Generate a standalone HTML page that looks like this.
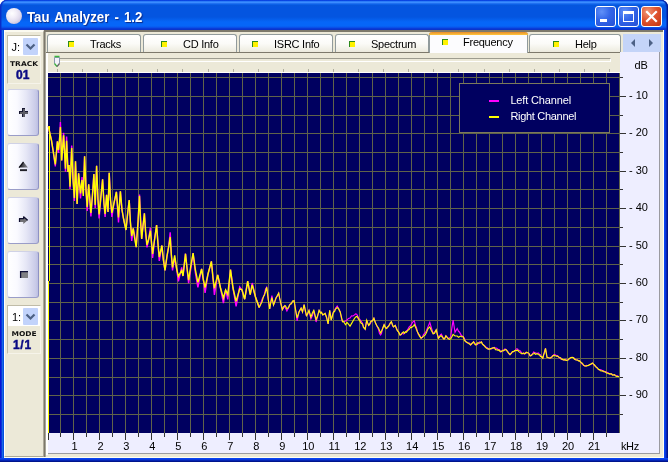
<!DOCTYPE html>
<html><head><meta charset="utf-8"><title>Tau Analyzer - 1.2</title>
<style>
*{box-sizing:border-box;margin:0;padding:0}
html,body{width:668px;height:462px;overflow:hidden;background:#fff}
body{position:relative;font-family:"Liberation Sans",sans-serif;font-size:11px;color:#000}
.abs{position:absolute}
#frame{left:0;top:0;width:668px;height:462px;border-radius:7px 7px 0 0;
 background:linear-gradient(90deg,#0814d4 0,#0814d4 1px,#0a34da 1px,#0a34da 2px,#1a68e4 2px,#1a68e4 3px,#0450e0 3px,#0450e0 4px,#0a44f0 4px,#0a44f0 665px,#0838dc 665px,#0838dc 666px,#0424b4 666px,#0424b4 667px,#00148c 667px)}
#frameb{left:0;top:458px;width:668px;height:4px;background:linear-gradient(180deg,#0a44f0 0,#0a44f0 1px,#0838dc 1px,#0838dc 2px,#0424b4 2px,#0424b4 3px,#00148c 3px)}
#title{left:0;top:0;width:668px;height:30px;border-radius:7px 7px 0 0;
 background:linear-gradient(180deg,#0840e0 0,#0a48e4 .7px,#2c7cf8 1.5px,#3a8cff 2.5px,#2070f0 3.5px,#0a60e8 4.5px,#0656dc 5.5px,#0455e0 7px,#0455e0 17px,#0560ee 20px,#0666f8 22px,#0666f8 26px,#0a50e8 27.5px,#0a3cd8 28.5px,#0c30c4 30px);box-shadow:inset 1px 0 0 #0a2cc8,inset 2px 0 0 rgba(10,50,200,.5),inset -1px 0 0 #001890,inset -2px 0 0 rgba(4,36,180,.6)}
#title .t{left:26.5px;top:9px;color:#fff;font-weight:bold;font-size:14.5px;line-height:16px;text-shadow:1px 1px 1px #0a2a88;white-space:nowrap;transform:scaleX(.912);transform-origin:0 0;word-spacing:1.6px}
#ticon{left:6px;top:8px;width:16px;height:16px;border-radius:50%;
 background:radial-gradient(circle at 38% 34%,#ffffff 0,#f2eef8 30%,#e0daec 58%,#c2bbd8 82%,#9490c4 100%)}
.tb{top:6px;width:21px;height:21px;border-radius:3px;border:1px solid #fff}
.tb.bl{background:radial-gradient(circle at 30% 25%,#6090f8 0,#3264e8 45%,#2450d4 100%)}
.tb.rd{background:radial-gradient(circle at 30% 25%,#f09878 0,#e05430 45%,#c43410 100%)}
#client{left:4px;top:30px;width:660px;height:428px;background:#ece9d8}
/* left panel */
#lp{left:4px;top:30px;width:40px;height:427px;background:#ece9d8;border-left:1px solid #fff;border-top:2px solid #fbfaf0;border-right:1px solid #aca899;border-bottom:1px solid #aca899}
.box{left:7px;width:34px;border:1px solid #c0bca8;border-right-color:#f6f4ea;border-bottom-color:#f6f4ea;background:#ece9d8}
.combo{left:8px;width:32px;height:20px;background:#fff}
.dd{left:23px;width:15px;height:17px;background:#c2d3fb;border-radius:1px}
.sm{font-family:"DejaVu Sans","Liberation Sans",sans-serif;font-weight:bold;font-size:7.5px;line-height:8px;white-space:nowrap;color:#111;transform:scaleY(.88);transform-origin:0 0}
.big{font-weight:bold;font-size:12px;line-height:12px;color:#0a0a84;white-space:nowrap;-webkit-text-stroke:0.45px #0a0a84}
.btn{left:7px;width:32px;height:47px;border-radius:3px;border:1px solid #b4b6d4;border-left-color:#d8daea;border-top-color:#d0d2e6;border-right-color:#8e92c4;border-bottom-color:#9a9dc8;
 background:linear-gradient(90deg,#ffffff 0,#fafaff 30%,#e6e7f6 60%,#c9cbe8 92%,#bcbfe2 100%)}
/* right panel */
#rp{left:44px;top:30px;width:620px;height:428px;border-left:2px solid #7d796b;border-top:2px solid #7d796b;background:#ece9d8}
#rp:before{content:'';position:absolute;left:-1px;top:0;width:1px;height:426px;background:#a8a69a}
.tab{top:34px;height:18px;border:1px solid #919b9c;border-bottom:none;border-radius:3px 3px 0 0;background:linear-gradient(180deg,#ffffff 0,#fbfbf8 50%,#f1f0e6 85%,#ebe9dc 100%)}
.tab.act{top:32px;height:21px;background:#fcfcfe;border-top:none}
.tab.act:before{content:"";position:absolute;left:-1px;right:-1px;top:0;height:3px;border-radius:3px 3px 0 0;background:linear-gradient(180deg,#e68b2c 0,#ffc73c 100%)}
.ico{top:6px;width:6px;height:6px;background:#fff200;border-left:1px solid #2c8a1c;border-top:1px solid #2c8a1c}
.tl{top:2px;white-space:nowrap;font-size:11px;line-height:14px;letter-spacing:-0.25px}
#nav{left:623px;top:34px;width:38px;height:18px;background:#c4d4f8}
#pgtop{left:46px;top:52px;width:574px;height:1px;background:#7d796b}
#pgleft{left:46px;top:53px;width:2px;height:402px;background:linear-gradient(90deg,#fff 0,#fff 100%)}
#lav{left:620px;top:52px;width:40px;height:402px;background:#eeeeff;border-right:1px solid #9a9aa0;border-bottom:1px solid #9a9aa0}
#lavb{left:46px;top:433px;width:614px;height:21px;background:#eeeeff;border-right:1px solid #9a9aa0;border-bottom:1px solid #9a9aa0}
#hlr{left:663px;top:30px;width:1px;height:428px;background:#fffff0}
#hlb{left:4px;top:457px;width:660px;height:1px;background:#fffff0}
#track{left:59px;top:58px;width:552px;height:4px;border-top:1px solid #9d9c8f;border-left:1px solid #9d9c8f;border-bottom:1px solid #fff;border-right:1px solid #fff;background:#ece9d8}
svg{position:absolute;left:0;top:0}
svg text{font-family:"Liberation Sans",sans-serif;font-size:11px}
#w{position:absolute;left:0;top:0;width:668px;height:462px;will-change:transform}
</style></head><body><div id="w">
<div id="frame" class="abs"></div>
<div id="frameb" class="abs"></div>
<div id="title" class="abs"><div id="ticon" class="abs"></div><div class="abs t">Tau Analyzer - 1.2</div>
 <div class="abs tb bl" style="left:595px"><svg width="19" height="19" style="left:0;top:0"><rect x="4" y="12" width="7" height="3" fill="#fff"/></svg></div>
 <div class="abs tb bl" style="left:618px"><svg width="19" height="19" style="left:0;top:0"><rect x="4.5" y="5.5" width="10" height="9" fill="none" stroke="#fff" stroke-width="1"/><rect x="4" y="4" width="11" height="3" fill="#fff"/></svg></div>
 <div class="abs tb rd" style="left:641px"><svg width="19" height="19" style="left:0;top:0"><path d="M5 5L14 14M14 5L5 14" stroke="#fff" stroke-width="2.2" stroke-linecap="square"/></svg></div>
</div>
<div id="client" class="abs"></div>
<div id="lp" class="abs"></div>
<!-- box 1 -->
<div class="abs box" style="top:35px;height:49px"></div>
<div class="abs combo" style="top:36px"></div>
<div class="abs dd" style="top:38px"><svg width="15" height="17"><path d="M3.5 6.5L7.5 10.5L11.5 6.5" fill="none" stroke="#4d6185" stroke-width="2.2"/></svg></div>
<div class="abs" style="left:11.5px;top:41px;font-size:11px;line-height:13px">J:</div>
<div class="abs sm" style="left:10px;top:60.5px">TRACK</div>
<div class="abs big" style="left:16px;top:69px">01</div>
<!-- buttons -->
<div class="abs btn" style="top:89px"><svg width="30" height="45"><rect x="11" y="21" width="9" height="3" fill="#161630"/><rect x="14" y="18" width="3" height="9" fill="#161630"/><rect x="12" y="22" width="8" height="2" fill="#5c5c64"/><rect x="15" y="19" width="2" height="8" fill="#5c5c64"/><rect x="14" y="21" width="1" height="1" fill="#161630"/></svg></div>
<div class="abs btn" style="top:143px"><svg width="30" height="45"><defs><linearGradient id="eg" x1="0" x2="1" y1="0" y2="0"><stop offset="0" stop-color="#141420"/><stop offset="0.45" stop-color="#4a4a50"/><stop offset="1" stop-color="#909094"/></linearGradient></defs><path d="M15.5 18L20 23.6H11Z" fill="url(#eg)"/><path d="M15.5 18L11 23.6" stroke="#101018" stroke-width="1.2" fill="none"/><rect x="12" y="25.2" width="7" height="1.9" fill="#202028"/></svg></div>
<div class="abs btn" style="top:197px"><svg width="30" height="45"><path d="M11 20H15.3V18L20 22L15.3 26V24H11Z" fill="#707074"/><path d="M11.5 24V20.6H15.6V18.8L19.6 22.2" fill="none" stroke="#101030" stroke-width="1.2" stroke-linejoin="bevel"/></svg></div>
<div class="abs btn" style="top:251px"><svg width="30" height="45"><rect x="12" y="19" width="8" height="7" fill="#808084"/><path d="M12.6 26V19.6H20" fill="none" stroke="#101038" stroke-width="1.3"/></svg></div>
<!-- box 2 -->
<div class="abs box" style="top:305px;height:49px"></div>
<div class="abs combo" style="top:306px"></div>
<div class="abs dd" style="top:308px"><svg width="15" height="17"><path d="M3.5 6.5L7.5 10.5L11.5 6.5" fill="none" stroke="#4d6185" stroke-width="2.2"/></svg></div>
<div class="abs" style="left:12px;top:311px;font-size:11px;line-height:13px">1:</div>
<div class="abs sm" style="left:11.5px;top:330.5px">MODE</div>
<div class="abs big" style="left:13px;top:339px;letter-spacing:0.7px">1/1</div>
<!-- right panel -->
<div id="rp" class="abs"></div>
<div id="lav" class="abs"></div>
<div id="lavb" class="abs"></div>
<div id="pgleft" class="abs"></div><div id="hlr" class="abs"></div><div id="hlb" class="abs"></div>
<div id="pgtop" class="abs"></div>
<div class="abs tab" style="left:47px;width:94px"><div class="abs ico" style="left:20px"></div><div class="abs tl" style="left:42px">Tracks</div></div>
<div class="abs tab" style="left:143px;width:94px"><div class="abs ico" style="left:17px"></div><div class="abs tl" style="left:39px">CD Info</div></div>
<div class="abs tab" style="left:239px;width:94px"><div class="abs ico" style="left:12px"></div><div class="abs tl" style="left:34px">ISRC Info</div></div>
<div class="abs tab" style="left:335px;width:94px"><div class="abs ico" style="left:13px"></div><div class="abs tl" style="left:35px">Spectrum</div></div>
<div class="abs tab" style="left:529px;width:92px"><div class="abs ico" style="left:23px"></div><div class="abs tl" style="left:45px">Help</div></div>
<div class="abs tab act" style="left:429px;width:99px"><div class="abs ico" style="left:12px;top:7px"></div><div class="abs tl" style="left:33px;top:3px">Frequency</div></div>
<div id="nav" class="abs"><svg width="38" height="18"><path d="M12 5L8 9L12 13Z" fill="#4d6185"/><path d="M26 5L30 9L26 13Z" fill="#4d6185"/></svg></div>
<div id="track" class="abs"></div>
<svg width="668" height="462" viewBox="0 0 668 462">
<rect x="48" y="73" width="572" height="360" fill="#000060"/>
<path d="M60.5 73 V433 M73.5 73 V433 M86.5 73 V433 M99.5 73 V433 M112.5 73 V433 M125.5 73 V433 M138.5 73 V433 M151.5 73 V433 M164.5 73 V433 M177.5 73 V433 M190.5 73 V433 M203.5 73 V433 M216.5 73 V433 M229.5 73 V433 M242.5 73 V433 M255.5 73 V433 M268.5 73 V433 M281.5 73 V433 M294.5 73 V433 M307.5 73 V433 M320.5 73 V433 M333.5 73 V433 M346.5 73 V433 M359.5 73 V433 M372.5 73 V433 M385.5 73 V433 M398.5 73 V433 M411.5 73 V433 M424.5 73 V433 M437.5 73 V433 M450.5 73 V433 M463.5 73 V433 M476.5 73 V433 M489.5 73 V433 M502.5 73 V433 M515.5 73 V433 M528.5 73 V433 M541.5 73 V433 M554.5 73 V433 M567.5 73 V433 M580.5 73 V433 M593.5 73 V433 M606.5 73 V433 M619.5 73 V433 M48 77.5 H620 M48 96.5 H620 M48 115.5 H620 M48 133.5 H620 M48 152.5 H620 M48 171.5 H620 M48 189.5 H620 M48 208.5 H620 M48 227.5 H620 M48 246.5 H620 M48 264.5 H620 M48 283.5 H620 M48 302.5 H620 M48 320.5 H620 M48 339.5 H620 M48 358.5 H620 M48 377.5 H620 M48 395.5 H620 M48 414.5 H620" stroke="#60634a" stroke-width="1" fill="none" shape-rendering="crispEdges"/>
<rect x="459.5" y="83.5" width="150" height="49" fill="#000060" stroke="#7c7a5c" stroke-width="1" shape-rendering="crispEdges"/>
<rect x="489" y="100" width="10" height="2" fill="#ff00ff"/><rect x="489" y="116" width="10" height="2" fill="#ffff00"/>
<text x="510.4" y="103.8" fill="#fff" style="letter-spacing:-0.15px">Left Channel</text>
<text x="510.4" y="119.8" fill="#fff" style="letter-spacing:-0.3px">Right Channel</text>
<path d="M49.5 127.0 L48.5 127.0 L50.0 134.0 L51.4 140.0 L53.0 150.0 L55.3 166.5 L56.5 152.0 L57.4 141.3 L58.5 153.0 L59.5 140.0 L60.4 122.0 L61.7 160.5 L63.6 132.9 L65.5 171.7 L66.6 136.6 L68.0 172.0 L69.0 165.0 L70.0 189.0 L71.7 145.5 L73.0 177.5 L74.4 201.0 L75.5 161.2 L77.1 203.9 L78.6 173.2 L80.5 198.4 L82.0 177.0 L83.3 193.5 L84.6 156.3 L86.0 190.0 L87.2 210.9 L88.7 184.4 L90.9 216.5 L92.4 196.0 L93.9 174.0 L95.2 208.0 L96.6 165.7 L98.0 200.0 L99.1 218.4 L100.8 198.0 L102.6 179.2 L104.0 204.0 L105.1 217.0 L106.6 194.9 L108.0 212.0 L109.2 172.8 L110.5 200.0 L111.9 216.9 L114.0 203.0 L116.4 191.9 L118.5 222.4 L120.4 191.2 L122.0 210.0 L123.8 220.0 L126.0 230.0 L127.6 214.0 L129.2 200.0 L130.4 222.0 L131.7 240.9 L133.2 228.4 L134.6 235.0 L136.2 247.1 L138.0 222.0 L139.5 194.5 L140.6 219.5 L141.7 238.9 L143.0 226.0 L144.4 213.4 L145.6 232.0 L147.0 247.4 L148.5 240.0 L150.4 227.7 L152.6 258.0 L154.5 240.0 L156.6 225.0 L158.0 244.0 L159.3 261.0 L161.9 245.5 L163.4 260.0 L165.0 270.4 L167.0 256.0 L168.8 246.0 L170.2 232.4 L171.3 254.0 L172.5 270.4 L174.7 257.9 L176.5 268.0 L178.4 281.4 L181.7 267.4 L183.0 276.0 L185.5 253.7 L187.0 268.0 L188.6 283.1 L190.8 269.0 L193.1 253.2 L195.4 273.0 L197.9 287.4 L201.6 268.9 L203.4 280.0 L205.1 292.9 L208.0 274.0 L211.4 261.4 L213.0 278.0 L214.4 295.0 L217.7 274.9 L220.5 288.0 L223.4 303.1 L225.6 289.9 L227.8 299.4 L230.5 269.7 L233.0 288.0 L236.1 306.4 L239.7 287.0 L242.0 290.0 L244.7 299.2 L247.7 281.2 L250.2 294.7 L252.2 283.0 L255.5 297.0 L259.2 307.4" stroke="#ff00ff" stroke-width="1.4" fill="none" stroke-linejoin="miter"/>
<path d="M259.2 307.4 L262.2 299.0 L263.5 296.7 L264.5 294.0 L265.5 289.3 L266.7 287.2 L268.2 299.0 L269.7 308.9 L270.5 303.0 L271.9 295.5 L273.5 305.0 L274.5 303.0 L276.0 298.0 L277.5 295.9 L278.7 293.2 L279.5 297.5 L280.5 302.0 L281.5 305.5 L282.4 309.6 L283.5 308.1 L284.7 305.9 L285.5 308.0 L286.9 311.0 L288.5 308.1 L289.5 305.1 L290.5 304.0 L291.5 302.9 L292.5 301.9 L294.1 300.7 L295.6 310.0 L297.1 320.9 L299.0 312.0 L301.1 308.1 L302.5 312.0 L304.1 304.7 L305.5 311.9 L306.4 315.6 L307.5 314.6 L309.0 310.4 L310.9 319.0 L312.5 315.3 L313.8 310.4 L316.1 322.0 L317.5 316.7 L319.1 310.4 L320.5 312.0 L321.5 312.8 L322.8 314.9 L325.1 313.4 L326.5 317.2 L328.1 323.9 L329.7 310.4 L331.2 320.2 L332.5 314.4 L333.5 311.9 L334.5 310.2 L335.5 308.3 L337.2 306.0 L338.5 308.3 L340.2 311.9 L341.5 318.4 L342.5 321.7 L343.5 321.5 L344.5 321.4 L345.5 321.0 L347.0 320.0 L348.5 318.4 L350.0 318.0 L351.5 315.9 L353.0 316.0 L354.5 314.9 L355.5 313.9 L356.7 314.2 L357.5 315.5 L358.5 318.2 L359.5 319.0 L361.0 321.0 L362.5 323.2 L363.5 326.8 L365.2 329.2 L366.7 320.2 L367.5 323.0 L368.7 325.4 L369.5 324.7 L370.5 323.5 L371.5 321.0 L372.5 320.5 L373.9 318.2 L375.5 322.9 L377.0 326.0 L378.5 329.4 L379.5 333.4 L380.6 335.0 L381.5 333.5 L382.5 328.6 L384.1 324.7 L385.5 327.4 L386.6 328.4 L387.5 327.7 L388.5 325.7 L389.5 324.4 L390.5 322.9 L391.4 321.7 L392.5 325.6 L393.4 326.9 L395.2 325.4 L396.5 328.0 L397.5 330.7 L398.5 331.6 L400.1 335.1 L401.5 334.6 L402.3 332.9 L403.5 334.0 L404.6 333.2 L405.5 331.8 L406.5 330.7 L407.5 330.1 L409.0 327.0 L410.5 325.8 L411.5 324.1 L412.5 322.3 L413.5 321.4 L414.3 320.9 L415.5 325.5 L416.5 327.7 L417.5 332.0 L418.5 334.7 L419.5 334.8 L421.1 338.1 L422.5 337.3 L423.5 334.5 L425.0 333.0 L426.5 330.8 L427.5 328.0 L428.5 325.4 L429.8 322.5 L431.5 328.1 L433.2 333.7 L434.5 332.4 L436.2 329.9 L437.5 334.8 L438.5 338.2 L439.5 336.3 L440.5 334.6 L441.4 334.0 L442.5 336.4 L443.7 338.9 L444.5 338.9 L445.9 335.9 L448.2 338.6 L449.5 338.1 L450.7 337.0 L451.5 330.4 L453.1 320.2 L455.0 332.2 L457.2 328.4 L458.5 331.3 L459.4 332.0 L460.5 333.9 L461.5 335.6 L463.2 336.7 L464.5 338.6 L465.4 341.2 L466.5 342.5 L468.0 343.0 L469.5 343.0 L470.6 344.9 L471.5 344.3 L472.5 342.6 L473.6 341.9 L474.5 342.6 L475.9 344.9 L477.5 344.4 L478.5 343.0 L479.5 341.9 L480.5 342.3 L481.4 341.9 L482.5 344.1 L484.0 345.5 L485.5 346.5 L486.4 347.9 L487.5 347.8 L488.5 349.4 L489.4 349.1 L490.5 348.6 L491.5 348.8 L493.1 347.9 L494.5 347.4 L495.5 348.2 L496.5 348.1 L497.6 349.0 L498.5 349.9 L499.5 349.6 L500.5 351.9 L501.3 351.6 L502.5 350.2 L503.5 350.9 L504.5 349.2 L505.8 349.4 L507.5 351.1 L508.5 353.3 L510.0 354.6 L511.5 352.6 L512.5 351.8 L513.3 351.6 L514.5 351.2 L515.5 350.1 L516.5 348.9 L517.7 349.0 L518.5 350.7 L519.5 350.3 L520.5 351.1 L521.5 352.7 L522.2 353.7 L523.5 353.7 L524.5 353.8 L525.5 352.5 L526.5 352.7 L527.6 352.8 L528.5 353.0 L529.5 355.0 L530.2 355.9 L531.5 355.0 L532.5 353.8 L533.8 352.0 L534.5 352.9 L535.5 352.8 L536.5 353.3 L537.5 353.2 L538.3 353.0 L539.5 354.3 L540.5 355.0 L541.5 357.0 L542.8 358.2 L543.5 355.3 L544.5 351.3 L545.5 348.4 L547.0 357.3 L548.5 357.7 L550.0 358.2 L551.5 357.6 L552.5 355.5 L553.5 355.5 L554.5 354.5 L555.5 354.9 L556.5 355.8 L557.5 355.7 L559.0 357.3 L560.5 358.8 L561.5 358.5 L562.5 359.5 L563.5 360.0 L564.5 359.9 L565.5 359.4 L566.5 360.1 L568.0 360.0 L569.5 358.6 L570.5 357.8 L572.1 357.3 L573.5 357.7 L574.5 358.5 L576.1 360.0 L577.5 359.9 L578.5 360.8 L579.6 360.9 L580.5 361.8 L581.5 363.3 L582.5 364.2 L583.5 365.2 L585.0 366.0 L586.5 365.4 L587.5 365.5 L588.6 365.4 L589.5 364.6 L590.5 364.4 L591.5 363.9 L592.6 363.1 L593.5 364.5 L594.5 365.5 L595.8 366.7 L596.5 367.1 L597.5 368.4 L598.5 369.5 L599.5 369.9 L600.5 369.6 L601.5 370.0 L602.5 370.8 L603.5 370.8 L604.8 371.7 L605.5 372.3 L606.5 372.2 L607.5 372.5 L608.5 373.1 L609.3 373.9 L610.5 373.8 L611.5 374.0 L612.5 374.6 L613.8 374.9 L614.5 375.1 L615.5 375.3 L616.5 376.0 L617.5 375.8 L619.0 376.7" stroke="#ff00ff" stroke-width="1.15" fill="none" stroke-linejoin="miter"/>
<path d="M49.5 127.0 L48.5 127.0 L50.0 134.0 L51.4 140.0 L53.0 150.0 L55.3 164.5 L56.5 152.0 L57.4 141.3 L58.5 150.0 L59.5 140.0 L60.4 127.0 L61.7 160.5 L63.6 135.4 L65.5 168.7 L66.6 140.7 L68.0 172.0 L69.0 165.0 L70.0 186.7 L71.7 148.0 L73.0 180.0 L74.4 198.0 L75.5 161.2 L77.1 203.9 L78.6 173.2 L80.5 193.4 L82.0 180.0 L83.3 196.0 L84.6 156.3 L86.0 190.0 L87.2 206.9 L88.7 184.4 L90.9 213.0 L92.4 196.0 L93.9 174.0 L95.2 205.0 L96.6 165.7 L98.0 200.0 L99.1 214.4 L100.8 198.0 L102.6 179.2 L104.0 204.0 L105.1 214.0 L106.6 194.9 L108.0 212.0 L109.2 172.8 L110.5 200.0 L111.9 212.9 L114.0 203.0 L116.4 191.9 L118.5 217.4 L120.4 191.2 L122.0 210.0 L123.8 220.0 L126.0 230.0 L127.6 214.0 L129.2 200.0 L130.4 222.0 L131.7 235.9 L133.2 228.4 L134.6 238.0 L136.2 247.1 L138.0 222.0 L139.5 196.0 L140.6 222.0 L141.7 238.9 L143.0 226.0 L144.4 213.4 L145.6 232.0 L147.0 244.9 L148.5 240.0 L150.4 230.7 L152.6 254.0 L154.5 240.0 L156.6 225.0 L158.0 244.0 L159.3 257.0 L161.9 245.5 L163.4 260.0 L165.0 270.4 L167.0 256.0 L168.8 246.0 L170.2 237.0 L171.3 254.0 L172.5 267.4 L174.7 255.4 L176.5 268.0 L178.4 276.4 L181.7 270.4 L183.0 276.0 L185.5 253.7 L187.0 268.0 L188.6 280.1 L190.8 266.0 L193.1 253.2 L195.4 270.0 L197.9 282.4 L201.6 268.9 L203.4 280.0 L205.1 287.6 L208.0 274.0 L211.4 261.4 L213.0 278.0 L214.4 288.4 L217.7 274.9 L220.5 288.0 L223.4 298.1 L225.6 289.9 L227.8 294.4 L230.5 269.7 L233.0 288.0 L236.1 301.4 L239.7 288.7 L242.0 290.0 L244.7 299.2 L247.7 281.2 L250.2 294.7 L252.2 284.9 L255.5 297.0 L259.2 307.4" stroke="#ffff00" stroke-width="1.4" fill="none" stroke-linejoin="miter"/>
<path d="M259.2 307.4 L262.2 301.4 L263.5 296.4 L264.5 295.0 L265.5 291.6 L266.7 287.2 L268.2 299.0 L269.7 308.9 L270.5 304.2 L271.9 297.7 L273.5 305.0 L274.5 302.2 L276.0 298.0 L277.5 295.2 L278.7 293.2 L279.5 297.5 L280.5 302.0 L281.5 306.7 L282.4 309.6 L283.5 306.9 L284.7 305.9 L285.5 305.9 L286.9 308.9 L288.5 307.5 L289.5 305.2 L290.5 304.0 L291.5 303.7 L292.5 301.0 L294.1 300.7 L295.6 310.0 L297.1 317.9 L299.0 312.0 L301.1 308.1 L302.5 312.0 L304.1 304.7 L305.5 311.2 L306.4 315.6 L307.5 313.9 L309.0 310.4 L310.9 317.1 L312.5 312.8 L313.8 310.4 L316.1 319.4 L317.5 316.3 L319.1 310.4 L320.5 313.1 L321.5 312.2 L322.8 314.9 L325.1 313.4 L326.5 317.2 L328.1 323.9 L329.7 310.4 L331.2 320.2 L332.5 315.6 L333.5 311.9 L334.5 311.8 L335.5 309.2 L337.2 307.5 L338.5 308.7 L340.2 311.9 L341.5 317.3 L342.5 321.7 L343.5 321.6 L344.5 323.0 L345.5 324.7 L347.0 322.4 L348.5 324.2 L350.0 326.2 L351.5 323.6 L353.0 321.0 L354.5 318.5 L355.5 317.2 L356.7 316.4 L357.5 317.0 L358.5 319.1 L359.5 320.2 L361.0 323.0 L362.5 324.1 L363.5 327.5 L365.2 329.2 L366.7 320.2 L367.5 322.4 L368.7 325.4 L369.5 324.5 L370.5 321.8 L371.5 321.0 L372.5 321.0 L373.9 318.2 L375.5 323.1 L377.0 326.0 L378.5 328.0 L379.5 330.4 L380.6 332.9 L381.5 331.3 L382.5 329.0 L384.1 324.7 L385.5 327.8 L386.6 328.4 L387.5 327.0 L388.5 326.5 L389.5 324.8 L390.5 322.5 L391.4 321.7 L392.5 324.8 L393.4 326.9 L395.2 325.4 L396.5 328.9 L397.5 330.8 L398.5 331.9 L400.1 335.1 L401.5 333.9 L402.3 332.9 L403.5 331.9 L404.6 333.2 L405.5 331.8 L406.5 332.3 L407.5 330.6 L409.0 329.5 L410.5 327.4 L411.5 327.4 L412.5 326.8 L413.5 325.8 L414.3 324.7 L415.5 327.1 L416.5 329.6 L417.5 332.0 L418.5 333.7 L419.5 336.1 L421.1 338.1 L422.5 337.1 L423.5 336.1 L425.0 335.2 L426.5 332.6 L427.5 329.7 L428.5 328.1 L429.8 326.9 L431.5 330.8 L433.2 333.7 L434.5 333.2 L436.2 329.9 L437.5 334.8 L438.5 338.2 L439.5 337.2 L440.5 335.8 L441.4 335.9 L442.5 337.3 L443.7 338.9 L444.5 339.0 L445.9 335.9 L448.2 338.6 L449.5 339.4 L450.7 338.9 L451.5 337.5 L453.1 334.4 L455.0 336.0 L457.2 336.0 L458.5 337.3 L459.4 336.7 L460.5 336.1 L461.5 336.7 L463.2 336.7 L464.5 340.4 L465.4 341.2 L466.5 342.1 L468.0 343.0 L469.5 344.0 L470.6 344.9 L471.5 343.6 L472.5 343.1 L473.6 341.9 L474.5 343.9 L475.9 344.9 L477.5 342.8 L478.5 343.0 L479.5 343.1 L480.5 342.8 L481.4 341.9 L482.5 344.1 L484.0 345.5 L485.5 347.4 L486.4 347.9 L487.5 348.9 L488.5 348.8 L489.4 349.1 L490.5 348.9 L491.5 348.3 L493.1 347.9 L494.5 347.8 L495.5 349.7 L496.5 349.7 L497.6 350.1 L498.5 349.9 L499.5 350.9 L500.5 351.2 L501.3 351.6 L502.5 350.8 L503.5 350.2 L504.5 350.1 L505.8 349.4 L507.5 351.7 L508.5 352.9 L510.0 354.6 L511.5 353.2 L512.5 351.5 L513.3 351.6 L514.5 350.7 L515.5 350.3 L516.5 350.7 L517.7 350.1 L518.5 351.4 L519.5 352.1 L520.5 352.9 L521.5 353.7 L522.2 353.7 L523.5 353.0 L524.5 353.9 L525.5 353.5 L526.5 352.2 L527.6 352.8 L528.5 353.0 L529.5 354.2 L530.2 355.9 L531.5 355.6 L532.5 354.0 L533.8 353.7 L534.5 353.1 L535.5 354.3 L536.5 354.0 L537.5 353.7 L538.3 354.6 L539.5 354.9 L540.5 356.4 L541.5 356.6 L542.8 358.2 L543.5 355.3 L544.5 352.4 L545.5 348.4 L547.0 357.3 L548.5 357.7 L550.0 358.2 L551.5 357.0 L552.5 356.7 L553.5 355.2 L554.5 355.5 L555.5 355.7 L556.5 356.2 L557.5 356.1 L559.0 357.3 L560.5 357.7 L561.5 359.3 L562.5 359.4 L563.5 360.0 L564.5 359.7 L565.5 360.1 L566.5 360.4 L568.0 360.0 L569.5 358.4 L570.5 357.8 L572.1 357.3 L573.5 357.8 L574.5 359.2 L576.1 360.0 L577.5 360.0 L578.5 360.9 L579.6 360.9 L580.5 362.0 L581.5 362.7 L582.5 363.3 L583.5 365.2 L585.0 366.0 L586.5 366.1 L587.5 365.6 L588.6 365.4 L589.5 364.6 L590.5 364.5 L591.5 363.6 L592.6 363.1 L593.5 364.2 L594.5 365.0 L595.8 366.7 L596.5 367.6 L597.5 367.9 L598.5 369.5 L599.5 369.6 L600.5 370.8 L601.5 371.0 L602.5 370.7 L603.5 371.7 L604.8 371.7 L605.5 371.8 L606.5 373.1 L607.5 373.3 L608.5 373.4 L609.3 373.9 L610.5 373.9 L611.5 373.8 L612.5 375.1 L613.8 374.9 L614.5 374.6 L615.5 375.9 L616.5 376.4 L617.5 376.3 L619.0 376.7" stroke="#ffff00" stroke-width="1.15" fill="none" stroke-linejoin="miter"/>
<rect x="49" y="126" width="1" height="155" fill="#ffff00"/><rect x="48" y="281" width="1" height="153" fill="#ffff00"/>
<rect x="46" y="72" width="574" height="1" fill="#fff"/>
<path d="M620 77.5 H623 M620 96.5 H626 M620 115.5 H623 M620 133.5 H626 M620 152.5 H623 M620 171.5 H626 M620 189.5 H623 M620 208.5 H626 M620 227.5 H623 M620 246.5 H626 M620 264.5 H623 M620 283.5 H626 M620 302.5 H623 M620 320.5 H626 M620 339.5 H623 M620 358.5 H626 M620 377.5 H623 M620 395.5 H626 M620 414.5 H623 M48.5 433 V440 M60.5 433 V437 M73.5 433 V440 M86.5 433 V437 M99.5 433 V440 M112.5 433 V437 M125.5 433 V440 M138.5 433 V437 M151.5 433 V440 M164.5 433 V437 M177.5 433 V440 M190.5 433 V437 M203.5 433 V440 M216.5 433 V437 M229.5 433 V440 M242.5 433 V437 M255.5 433 V440 M268.5 433 V437 M281.5 433 V440 M294.5 433 V437 M307.5 433 V440 M320.5 433 V437 M333.5 433 V440 M346.5 433 V437 M359.5 433 V440 M372.5 433 V437 M385.5 433 V440 M398.5 433 V437 M411.5 433 V440 M424.5 433 V437 M437.5 433 V440 M450.5 433 V437 M463.5 433 V440 M476.5 433 V437 M489.5 433 V440 M502.5 433 V437 M515.5 433 V440 M528.5 433 V437 M541.5 433 V440 M554.5 433 V437 M567.5 433 V440 M580.5 433 V437 M593.5 433 V440 M606.5 433 V437" stroke="#333" stroke-width="1" fill="none" shape-rendering="crispEdges"/>
<text x="629" y="99" fill="#000">- 10</text>
<text x="629" y="136" fill="#000">- 20</text>
<text x="629" y="174" fill="#000">- 30</text>
<text x="629" y="211" fill="#000">- 40</text>
<text x="629" y="249" fill="#000">- 50</text>
<text x="629" y="286" fill="#000">- 60</text>
<text x="629" y="323" fill="#000">- 70</text>
<text x="629" y="361" fill="#000">- 80</text>
<text x="629" y="398" fill="#000">- 90</text>
<text x="634.5" y="69" fill="#000">dB</text>
<text x="74.5" y="450" fill="#000" text-anchor="middle">1</text>
<text x="100.5" y="450" fill="#000" text-anchor="middle">2</text>
<text x="126.4" y="450" fill="#000" text-anchor="middle">3</text>
<text x="152.4" y="450" fill="#000" text-anchor="middle">4</text>
<text x="178.4" y="450" fill="#000" text-anchor="middle">5</text>
<text x="204.4" y="450" fill="#000" text-anchor="middle">6</text>
<text x="230.4" y="450" fill="#000" text-anchor="middle">7</text>
<text x="256.3" y="450" fill="#000" text-anchor="middle">8</text>
<text x="282.3" y="450" fill="#000" text-anchor="middle">9</text>
<text x="308.3" y="450" fill="#000" text-anchor="middle">10</text>
<text x="334.3" y="450" fill="#000" text-anchor="middle">11</text>
<text x="360.3" y="450" fill="#000" text-anchor="middle">12</text>
<text x="386.2" y="450" fill="#000" text-anchor="middle">13</text>
<text x="412.2" y="450" fill="#000" text-anchor="middle">14</text>
<text x="438.2" y="450" fill="#000" text-anchor="middle">15</text>
<text x="464.2" y="450" fill="#000" text-anchor="middle">16</text>
<text x="490.2" y="450" fill="#000" text-anchor="middle">17</text>
<text x="516.1" y="450" fill="#000" text-anchor="middle">18</text>
<text x="542.1" y="450" fill="#000" text-anchor="middle">19</text>
<text x="568.1" y="450" fill="#000" text-anchor="middle">20</text>
<text x="594.1" y="450" fill="#000" text-anchor="middle">21</text>
<text x="621" y="450" fill="#000" style="letter-spacing:-0.4px">kHz</text>
<path d="M57.5 69 V72 M82.5 69 V72 M107.5 69 V72 M132.5 69 V72 M157.5 69 V72 M182.5 69 V72 M208.5 69 V72 M233.5 69 V72 M258.5 69 V72 M283.5 69 V72 M308.5 69 V72 M333.5 69 V72 M358.5 69 V72 M383.5 69 V72 M408.5 69 V72 M433.5 69 V72 M458.5 69 V72 M484.5 69 V72 M509.5 69 V72 M534.5 69 V72 M559.5 69 V72 M584.5 69 V72 M609.5 69 V72" stroke="#b0ae9e" stroke-width="1" fill="none" shape-rendering="crispEdges"/>
<path d="M54.5 57.5 H59.5 V63.5 L57 66.5 L54.5 63.5 Z" fill="#f4f2fa" stroke="#8a98b0" stroke-width="1"/>
<path d="M54.5 56.5 H59.5" stroke="#3cb43c" stroke-width="1.5"/>
<path d="M54.5 63.5 L57 66.5" stroke="#3cb43c" stroke-width="1.2"/><path d="M57 66.5 L59.5 63.5" stroke="#6a6a6a" stroke-width="1.2"/>
</svg>
</div></body></html>
